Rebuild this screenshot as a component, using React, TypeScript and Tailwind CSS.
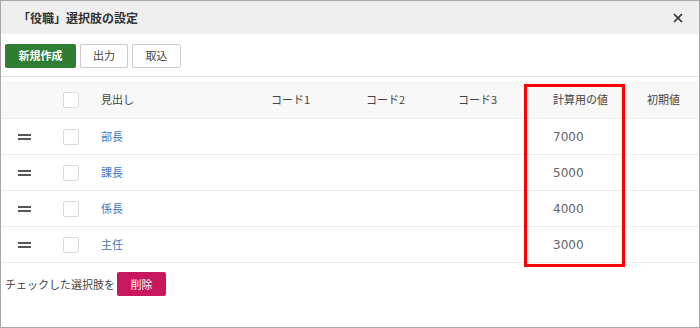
import { X } from "lucide-react";

const rows = [
  { name: "部長", value: "7000" },
  { name: "課長", value: "5000" },
  { name: "係長", value: "4000" },
  { name: "主任", value: "3000" },
];

const cols = "grid grid-cols-[46px_54px_170px_95px_92px_95px_94px_1fr] items-center";

function Checkbox() {
  return <div className="w-4 h-4 border border-[#dadada] rounded-[2px] bg-white" />;
}

function Handle() {
  return (
    <div className="flex flex-col gap-[2px] w-[13px]">
      <div className="h-[2px] bg-[#555]" />
      <div className="h-[2px] bg-[#555]" />
    </div>
  );
}

export default function App() {
  return (
    <div
      className="w-[700px] h-[328px] border border-[#a8a8a8] bg-white text-[11px] text-[#444] relative overflow-hidden"
      style={{ fontFamily: '"Noto Sans CJK JP", "Noto Sans", sans-serif' }}
    >
      {/* header */}
      <div className="h-[33px] bg-[#efefef] flex items-center justify-between pl-[17px] pr-[14px]">
        <span className="text-[12px] font-bold text-[#333]">「役職」選択肢の設定</span>
        <X size={14} strokeWidth={3} className="text-[#333]" />
      </div>

      {/* toolbar */}
      <div className="h-[43px] flex items-center gap-1 px-1 pt-[1px] border-b border-[#e2e2e2]">
        <button className="h-6 w-[71px] bg-[#2f7d32] text-white font-bold rounded-[2px]">新規作成</button>
        <button className="h-6 w-[48px] border border-[#ccc] rounded-[2px] bg-white text-[#444]">出力</button>
        <button className="h-6 w-[49px] border border-[#ccc] rounded-[2px] bg-white text-[#444]">取込</button>
      </div>

      {/* table */}
      <div className="mt-[4px]">
        <div className={`${cols} h-[38px] bg-[#f8f8f8] border-b border-[#ececec]`}>
          <div />
          <div className="pl-4">
            <Checkbox />
          </div>
          <div>見出し</div>
          <div>コード1</div>
          <div>コード2</div>
          <div>コード3</div>
          <div>計算用の値</div>
          <div>初期値</div>
        </div>
        {rows.map((r) => (
          <div key={r.name} className={`${cols} h-[36px] border-b border-[#ececec]`}>
            <div className="flex justify-center pl-[1px]">
              <Handle />
            </div>
            <div className="pl-4">
              <Checkbox />
            </div>
            <div className="text-[#3a78c6]">{r.name}</div>
            <div />
            <div />
            <div />
            <div className="text-[12px] text-[#666] font-['DejaVu_Sans',sans-serif]">{r.value}</div>
            <div />
          </div>
        ))}
      </div>

      {/* footer */}
      <div className="flex items-center gap-[2px] pl-1 mt-[9px]">
        <span>チェックした選択肢を</span>
        <button className="h-6 w-[49px] bg-[#c8175d] text-white rounded-[2px]">削除</button>
      </div>

      {/* annotation */}
      <div className="absolute left-[523px] top-[83px] w-[101px] h-[183px] border-[3px] border-[#f00]" />
    </div>
  );
}
